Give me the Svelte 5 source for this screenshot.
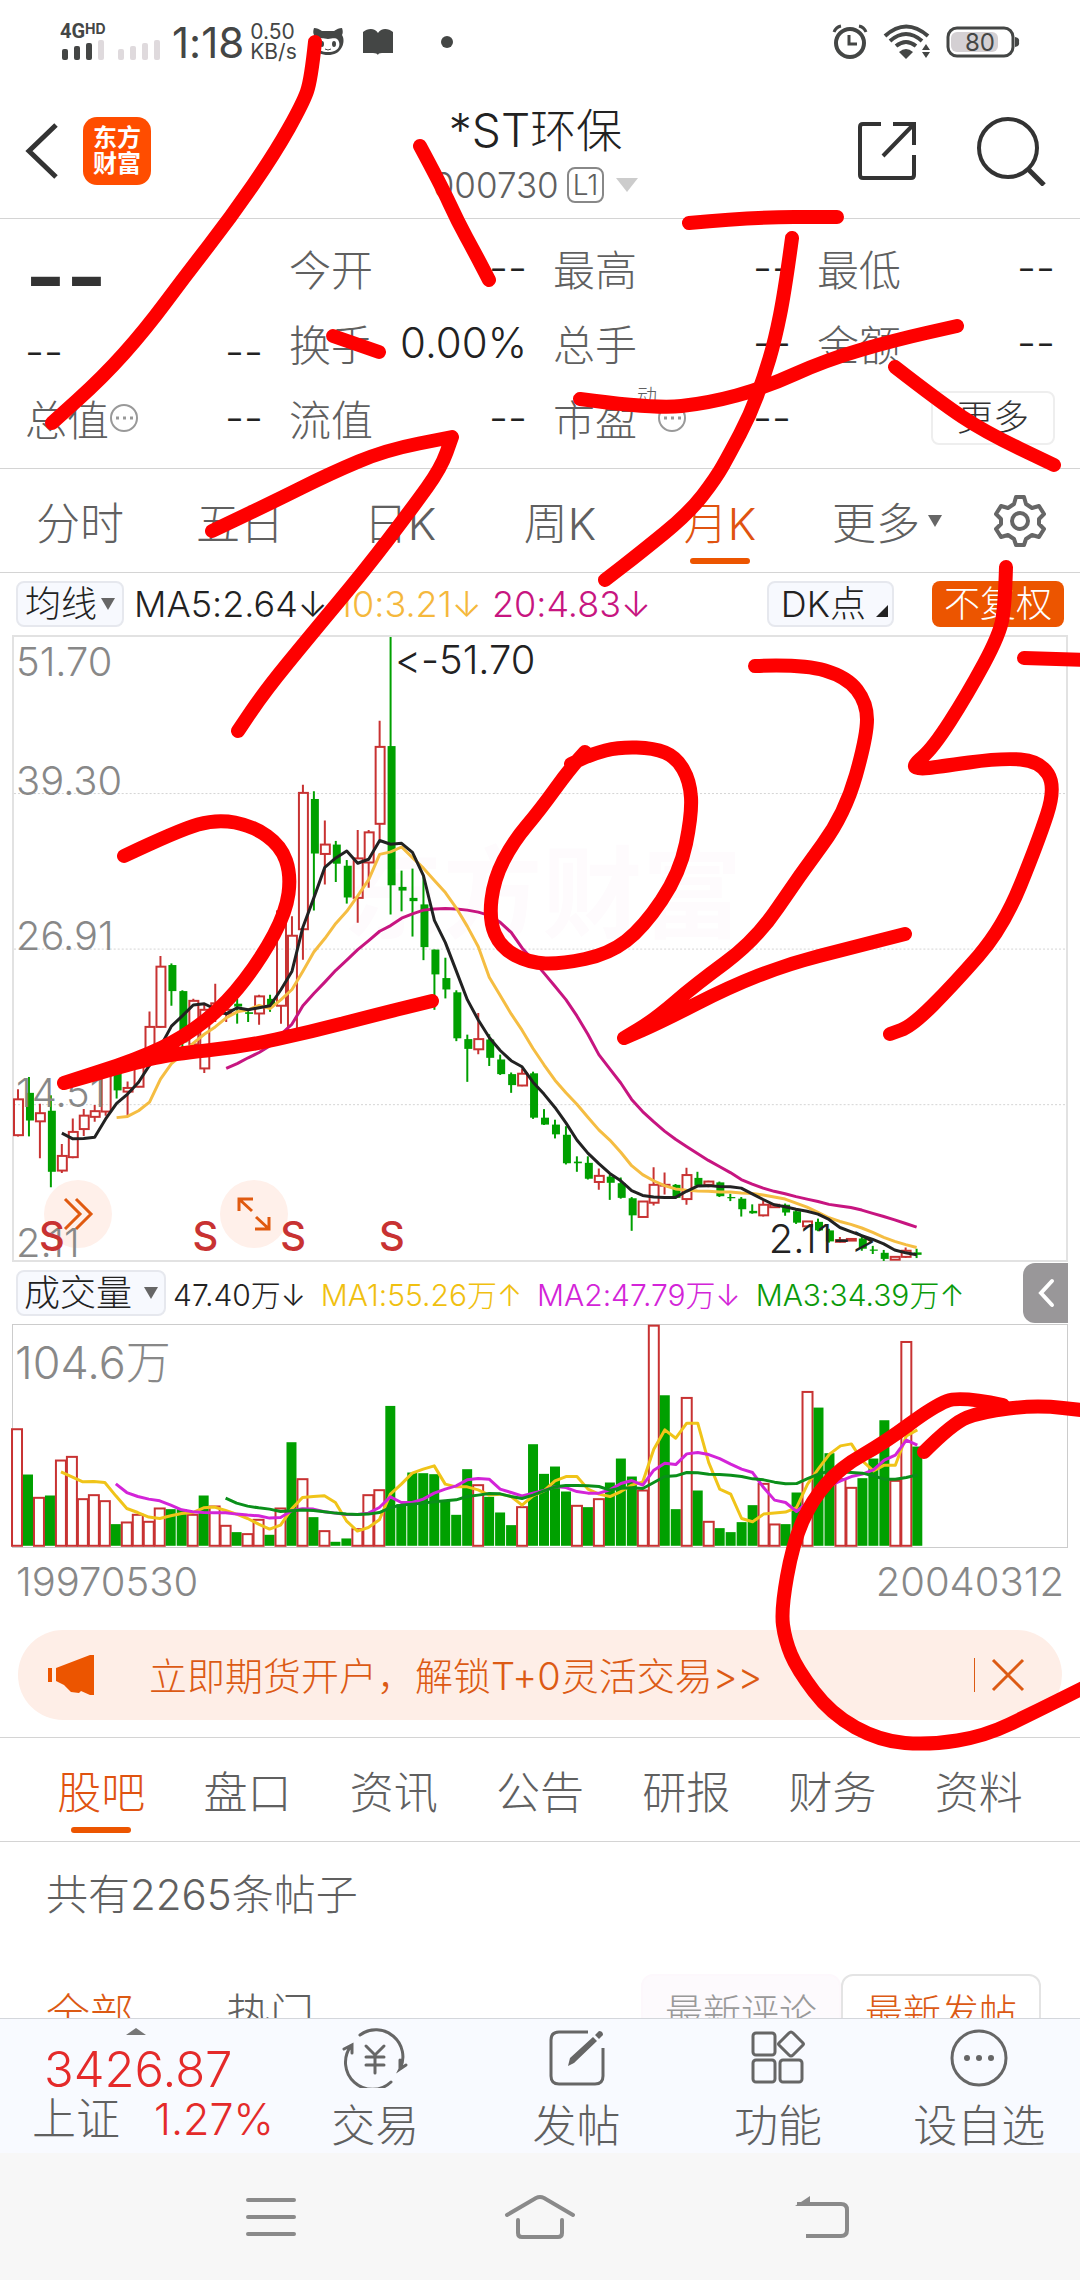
<script>
    const step = 10.99;
    const red = '#c83232';
    const green = '#00a000';

    // high, top, bottom, low, colour
    const candles = [
        [1125,1150,1238,1241,'r'],[1095,1134,1202,1241,'g'],[1161,1184,1204,1295,'r'],[1140,1178,1328,1366,'g'],
        [1260,1289,1325,1331,'r'],[1197,1230,1292,1295,'r'],[1174,1190,1223,1240,'r'],[1164,1179,1193,1205,'r'],
        [1080,1085,1180,1190,'r'],[1070,1078,1128,1148,'g'],[1106,1122,1131,1190,'r'],[1060,1068,1119,1120,'r'],
        [934,972,1060,1070,'r'],[798,824,972,974,'r'],[816,820,884,920,'g'],[882,884,1010,1025,'g'],
        [903,908,1015,1018,'r'],[915,930,1074,1085,'r'],[866,914,930,960,'r'],[900,930,940,960,'r'],
        [903,915,922,964,'g'],[930,936,940,960,'g'],[893,897,939,967,'r'],[893,903,918,935,'g'],
        [681,688,920,964,'r'],[700,748,980,990,'r'],[377,397,732,807,'r'],[393,412,546,686,'g'],
        [465,524,547,622,'r'],[515,524,571,616,'g'],[562,576,654,669,'g'],[488,558,655,716,'r'],
        [488,494,568,630,'r'],[220,284,473,512,'r'],[14,282,624,696,'g'],[588,628,637,688,'g'],
        [583,655,663,750,'g'],[600,671,776,808,'g'],[782,782,843,930,'g'],[802,852,880,902,'g'],
        [882,887,1000,1007,'g'],[991,1002,1026,1107,'g'],[938,1002,1027,1039,'r'],[990,1003,1048,1068,'g'],
        [1040,1052,1088,1090,'g'],[1084,1088,1115,1134,'g'],[1075,1087,1116,1118,'r'],[1082,1086,1195,1198,'g'],
        [1174,1195,1212,1213,'g'],[1200,1212,1236,1246,'g'],[1216,1237,1307,1310,'g'],[1290,1303,1307,1328,'g'],
        [1290,1306,1345,1347,'g'],[1320,1338,1353,1372,'r'],[1335,1340,1355,1397,'g'],[1342,1356,1392,1394,'g'],
        [1390,1393,1435,1473,'g'],[1400,1401,1439,1440,'r'],[1317,1360,1404,1411,'r'],[1330,1360,1362,1384,'r'],
        [1358,1360,1392,1394,'g'],[1318,1336,1395,1409,'r'],[1328,1343,1362,1364,'g'],[1350,1352,1360,1366,'r'],
        [1352,1354,1388,1390,'g'],[1382,1390,1393,1400,'g'],[1390,1394,1420,1438,'g'],[1408,1424,1430,1431,'g'],
        [1398,1409,1435,1438,'r'],[1408,1409,1415,1416,'r'],[1406,1409,1428,1436,'g'],[1422,1425,1453,1456,'g'],
        [1450,1450,1462,1466,'r'],[1443,1451,1472,1474,'g'],[1468,1472,1499,1502,'g'],[1488,1496,1500,1502,'r'],
        [1492,1493,1497,1498,'r'],[1485,1492,1517,1522,'g'],[1510,1519,1522,1530,'g'],[1520,1527,1542,1547,'g'],
        [1536,1537,1544,1545,'r'],[1514,1522,1537,1540,'r'],[1517,1526,1532,1540,'g']
    ];

    const ma5 = [1233,1247,1246,1243,1198,1160,1137,1108,1066,1020,970,945,918,915,928,940,925,930,925,920,880,835,727,655,580,557,540,570,560,514,523,521,543,600,710,765,835,905,955,998,1030,1055,1070,1108,1137,1170,1208,1250,1282,1308,1332,1350,1374,1386,1390,1391,1391,1376,1363,1362,1364,1365,1368,1382,1396,1409,1414,1420,1425,1432,1445,1465,1475,1485,1494,1505,1520,1527,1532];
    const ma10 = [1195,1192,1178,1157,1100,1062,1040,1012,990,972,950,935,930,919,927,905,880,835,788,755,718,688,650,610,548,542,530,556,582,612,642,680,725,775,850,895,940,980,1025,1065,1103,1134,1162,1194,1225,1250,1280,1313,1335,1350,1362,1370,1373,1375,1376,1378,1378,1380,1381,1385,1390,1395,1405,1415,1428,1441,1450,1457,1466,1477,1489,1499,1507,1514];
    const ma20 = [1074,1062,1048,1035,1018,990,965,920,890,862,833,808,782,760,737,723,705,694,685,682,681,682,685,690,698,715,740,778,808,840,872,905,945,990,1040,1075,1110,1150,1180,1205,1228,1248,1266,1283,1300,1315,1330,1347,1358,1368,1376,1382,1389,1395,1401,1408,1412,1416,1422,1430,1438,1446,1455,1464];

    const volumes = [
        'r537','g676','r743','g739','r631','r620','r747','r735','r753','g825','r817','r794','r815','r775','g780','g780',
        'r794','g739','r769','r827','g849','r852','r809','g857','r775','g579','r687','g804','r843','g878','g868','r837',
        'r735','r720','g470','g765','g670','g672','g675','g755','g797','g660','r705','g743','g790','g828','r771','g585',
        'g674','g652','g727','r767','g774','r747','g700','g628','g682','r721','r226','g438','g780','r443','g724','r815',
        'g837','g849','g819','g768','r701','r823','g825','g730','r425','g475','g612','r687','r713','g687','g628','g513',
        'r692','r275','g592'
    ];
    const vma1 = [668,683,698,697,700,740,778,790,804,808,800,793,790,776,774,784,795,808,825,840,828,780,745,742,740,760,815,846,835,812,735,705,672,660,650,705,713,713,722,738,735,742,768,740,725,695,682,682,720,735,742,727,708,698,600,542,567,522,522,640,720,735,808,818,795,792,789,775,705,658,615,590,584,635,665,648,648,560,542];
    const vma2 = [704,730,742,750,755,768,782,788,790,791,791,795,798,800,807,805,785,779,780,788,792,796,796,792,775,743,760,760,750,732,720,710,692,688,690,720,730,740,732,724,712,715,727,732,732,722,703,694,708,663,642,646,614,610,616,628,645,660,670,715,753,760,787,760,730,710,695,682,675,662,633,618,573,588];
    const vma3 = [747,762,771,776,780,787,785,783,784,788,792,795,796,795,790,775,768,765,762,758,755,752,742,738,733,734,742,748,738,725,713,709,709,710,712,723,717,716,718,700,682,680,670,671,675,676,678,682,689,692,699,704,703,688,675,665,668,670,672,680,690,690,685,677];

    const xAt = (i) => 4 + i * step;
    const priceY = (v) => (v - 14) / 2.45;
    const volumeY = (v) => (v - 227) / 3;

    function line(values, start, y) {
        return values.map((v, i) => xAt(start + i).toFixed(1) + ',' + y(v).toFixed(1)).join(' ');
    }

    // pen strokes drawn over the page
    const strokes = [
        [[315,42],[311,80],[303,103],[275,153],[231,217],[186,275],[145,330],[103,377],[52,423]],
        [[420,146],[441,185],[458,222],[475,253],[489,280]],
        [[689,223],[751,217],[837,217]],
        [[792,238],[785,290],[775,340],[764,377],[750,415],[730,453],[716,478],[689,513],[640,553],[605,580]],
        [[580,399],[654,409],[709,403],[764,388],[826,360],[895,340],[957,326]],
        [[895,367],[940,402],[985,432],[1054,465]],
        [[333,336],[379,352]],
        [[212,531],[269,504],[331,473],[386,450],[452,437],[452,437],[441,468],[413,507],[365,570],[310,636],[265,691],[238,731]],
        [[124,856],[179,830],[217,819],[253,826],[281,846],[291,875],[286,912],[262,957],[227,1003],[186,1036],[138,1059],[64,1083],[64,1083],[138,1062],[172,1054],[241,1047],[310,1032],[379,1014],[432,1001]],
        [[585,752],[571,767],[540,810],[513,842],[494,879],[489,920],[501,948],[530,963],[561,964],[609,954],[643,928],[680,873],[692,814],[690,781],[676,757],[654,748],[619,747],[592,754],[571,764]],
        [[755,666],[803,664],[847,677],[867,703],[867,736],[845,814],[800,875],[756,940],[695,985],[654,1020],[624,1038],[624,1038],[661,1022],[729,987],[788,964],[850,948],[905,934]],
        [[1006,567],[1005,603],[1000,634],[967,695],[933,748],[912,766],[920,769],[937,767],[1001,758],[1040,761],[1056,787],[1038,842],[1003,928],[953,985],[912,1026],[890,1034]],
        [[1024,658],[1090,660]],
        [[924,1452],[953,1423],[981,1412],[1036,1405],[1090,1411]],
        [[1003,1405],[960,1396],[934,1406],[884,1443],[841,1467],[812,1500],[793,1543],[781,1610],[785,1640],[797,1669],[831,1714],[880,1741],[930,1745],[985,1736],[1033,1713],[1085,1687]]
    ];

    function smooth(points) {
        let d = 'M' + points[0].join(' ');
        for (let i = 1; i < points.length - 1; i++) {
            const [x, y] = points[i];
            const [nx, ny] = points[i + 1];
            d += `Q${x} ${y} ${(x + nx) / 2} ${(y + ny) / 2}`;
        }
        return d + 'L' + points[points.length - 1].join(' ');
    }

    const periods = ['分时', '五日', '日K', '周K', '月K'];
    const sections = ['股吧', '盘口', '资讯', '公告', '研报', '财务', '资料'];
    let period = $state('月K');
    let section = $state('股吧');
</script>

<div class="app">
    <div class="status">
        <svg class="signal" width="102" height="48" viewBox="0 -8 102 48">
            <text x="0" y="16" class="net">4G</text>
            <text x="25" y="12" class="hd">HD</text>
            <g fill="#444645">
                <rect x="2" y="27" width="6" height="11" rx="2" />
                <rect x="14" y="24" width="6" height="14" rx="2" />
                <rect x="26" y="21" width="6" height="17" rx="2" />
            </g>
            <g fill="#dfdadd">
                <rect x="38" y="18" width="6" height="20" rx="2" />
                <rect x="58" y="27" width="6" height="11" rx="2" />
                <rect x="70" y="24" width="6" height="14" rx="2" />
                <rect x="82" y="21" width="6" height="17" rx="2" />
                <rect x="94" y="18" width="6" height="20" rx="2" />
            </g>
        </svg>
        <span class="clock">1:18</span>
        <span class="speed">0.50<br />KB/s</span>
        <svg width="34" height="30" viewBox="0 0 34 30">
            <path fill="#444645" d="M3 1c3 0 5 1 8 3h12c3-2 5-3 8-3 1 3 1 5 0 7 2 3 2 8 0 12-3 6-8 8-14 8S5 26 2 20C1 16 1 11 3 8 2 6 2 4 3 1z" />
            <path fill="#fff" d="M7 13c3-3 6-1 10-1s7-2 10 1c3 4 2 12-10 12S4 17 7 13z" />
            <ellipse cx="11" cy="17" rx="2" ry="3" fill="#444645" />
            <ellipse cx="23" cy="17" rx="2" ry="3" fill="#444645" />
            <path d="M14 22q3 2 6 0" fill="none" stroke="#444645" />
        </svg>
        <svg class="book" width="30" height="26" viewBox="0 0 30 26">
            <path fill="#444645" d="M0 3C5-1 12-1 15 4c3-5 10-5 15-1v21H19q-4 0-4 2-1-2-5-2H0z" />
        </svg>
        <i class="dot"></i>
        <div class="status-right">
            <svg width="36" height="36" viewBox="0 0 36 36" fill="none" stroke="#444645">
                <circle cx="18" cy="19" r="14" stroke-width="4" />
                <path d="M17 11v9h8" stroke-width="3" />
                <path d="M2 8q2-5 7-6M34 8q-2-5-7-6" stroke-width="3" />
            </svg>
            <svg width="48" height="36" viewBox="0 0 48 36" fill="none" stroke="#444645" stroke-width="4">
                <path d="M2 12q21-19 43 0M7 17q16-14 32 0M13 22q10-8 20 0" />
                <path d="M16 28q7-6 14 0l-7 7z" fill="#444645" stroke="none" />
                <path d="M39 26l4-6 4 6zM39 28l4 6 4-6z" fill="#444645" stroke="none" />
            </svg>
            <svg width="74" height="32" viewBox="0 0 74 32">
                <rect x="2" y="2" width="65" height="28" rx="9" fill="none" stroke="#444645" stroke-width="3" />
                <rect x="5" y="6" width="47" height="20" rx="6" fill="#d4d0d3" />
                <path d="M69 11q5 1 4 5 1 4-4 5z" fill="#444645" />
                <text x="34" y="25" text-anchor="middle" class="battery">80</text>
            </svg>
        </div>
    </div>

    <header>
        <div class="side">
            <button aria-label="返回">
                <svg width="34" height="56" viewBox="0 0 34 56" fill="none" stroke="#333" stroke-width="5">
                    <path d="M31 2L4 28l27 26" />
                </svg>
            </button>
            <span class="logo">东方<br />财富</span>
        </div>
        <div class="title">
            <h1>*ST环保</h1>
            <button class="code">000730<span class="level">L1</span><i class="down"></i></button>
        </div>
        <div class="side right">
            <button aria-label="分享">
                <svg width="60" height="60" viewBox="0 0 60 60" fill="none" stroke="#333" stroke-width="4">
                    <path d="M24 3H6q-3 0-3 3v48q0 3 3 3h48q3 0 3-3V34" />
                    <path d="M36 3h21v21M57 3L26 35" />
                </svg>
            </button>
            <button aria-label="搜索">
                <svg width="70" height="70" viewBox="0 0 70 70" fill="none" stroke="#333" stroke-width="4">
                    <circle cx="32" cy="32" r="29" />
                    <path d="M52 53l16 16" stroke-width="5" />
                </svg>
            </button>
        </div>
    </header>

    <section class="quote">
        <div class="col first">
            <div class="price">--</div>
            <div class="cell change"><b>--</b><b>--</b></div>
            <div class="cell"><span class="tip">总值<svg width="30" height="30" viewBox="0 0 30 30"><circle cx="15" cy="15" r="13" fill="none" stroke="#999" stroke-width="2" /><path d="M7 15h3m4 0h3m4 0h3" stroke="#999" stroke-width="3" /></svg></span><b>--</b></div>
        </div>
        <div class="col">
            <div class="cell">今开<b>--</b></div>
            <div class="cell">换手<b>0.00%</b></div>
            <div class="cell">流值<b>--</b></div>
        </div>
        <div class="col">
            <div class="cell">最高<b>--</b></div>
            <div class="cell">总手<b>--</b></div>
            <div class="cell"><span class="tip">市盈<sup>动</sup><svg width="30" height="30" viewBox="0 0 30 30"><circle cx="15" cy="15" r="13" fill="none" stroke="#999" stroke-width="2" /><path d="M7 15h3m4 0h3m4 0h3" stroke="#999" stroke-width="3" /></svg></span><b>--</b></div>
        </div>
        <div class="col">
            <div class="cell">最低<b>--</b></div>
            <div class="cell">金额<b>--</b></div>
            <div class="cell end"><button class="more">更多</button></div>
        </div>
    </section>

    <nav class="periods">
        {#each periods as p}
            <button class:active={p === period} onclick={() => period = p}>{p}</button>
        {/each}
        <button class="other">更多<i class="caret"></i></button>
        <button aria-label="设置">
            <svg width="52" height="54" viewBox="0 0 52 54" fill="none" stroke="#666" stroke-width="4" stroke-linejoin="round">
                <path d="M22 3h8l2 7 6 4 7-2 5 8-5 5v5l5 5-5 8-7-2-6 4-2 6h-8l-2-6-6-4-7 2-5-8 5-5v-5l-5-5 5-8 7 2 6-4z" />
                <circle cx="26" cy="27" r="8" />
            </svg>
        </button>
    </nav>

    <div class="indicators">
        <button class="pill">均线<i class="caret"></i></button>
        <span>MA5:2.64↓</span>
        <span class="yellow">10:3.21↓</span>
        <span class="pink">20:4.83↓</span>
        <button class="pill dk">DK点<i class="corner"></i></button>
        <button class="adjust">不复权</button>
    </div>

    <div class="chart">
        <button class="round forward" aria-label="快进">
            <svg width="32" height="34" viewBox="0 0 32 34" fill="none" stroke="#e05a10" stroke-width="3">
                <path d="M3 2l15 15L3 32M14 2l15 15-15 15" />
            </svg>
        </button>
        <button class="round expand" aria-label="全屏">
            <svg width="36" height="36" viewBox="0 0 36 36" fill="none" stroke="#e05a10" stroke-width="3">
                <path d="M3 15V3h14M3 3l13 12M20 21l13 12M33 21v12H19" />
            </svg>
        </button>
        <svg class="plot" viewBox="0 0 1055 625">
            <text x="330" y="294" class="mark">东方财富</text>
            {#each [157, 313, 469] as y}
                <path d="M0 {y}H1055" stroke="#d4d4d4" stroke-dasharray="2 2" />
            {/each}
            {#each candles as [high, top, bottom, low, c], i}
                {#if c === 'r'}
                    <path d="M{xAt(i)} {priceY(high)}V{priceY(top)}M{xAt(i)} {priceY(bottom)}V{priceY(low)}" stroke={red} stroke-width="2" />
                    <rect x={xAt(i) - 4} y={priceY(top)} width="9" height={priceY(bottom) - priceY(top)} fill="none" stroke={red} stroke-width="2" />
                {:else}
                    <path d="M{xAt(i)} {priceY(high)}V{priceY(low)}" stroke={green} stroke-width="2" />
                    <rect x={xAt(i) - 3} y={priceY(top)} width="8" height={priceY(bottom) - priceY(top)} fill={green} />
                {/if}
            {/each}
            <polyline points={line(ma20, 19, priceY)} stroke="#c71580" class="ma" />
            <polyline points={line(ma10, 9, priceY)} stroke="#f5bd42" class="ma" />
            <polyline points={line(ma5, 4, priceY)} stroke="#222" class="ma" />
            <g class="axis">
                <text x="2" y="39">51.70</text>
                <text x="2" y="158">39.30</text>
                <text x="2" y="314">26.91</text>
                <text x="2" y="471">14.51</text>
                <text x="2" y="622">2.11</text>
            </g>
            <g class="extreme">
                <text x="382" y="37">&lt;-51.70</text>
                <text x="757" y="618">2.11-&gt;</text>
            </g>
            {#each [38, 192, 280, 379] as x}
                <text {x} y="615" text-anchor="middle" class="sell">S</text>
            {/each}
        </svg>
    </div>

    <div class="volume-head">
        <button class="pill">成交量<i class="caret"></i></button>
        <span>47.40万↓</span>
        <span class="gold">MA1:55.26万↑</span>
        <span class="violet">MA2:47.79万↓</span>
        <span class="green">MA3:34.39万↑</span>
        <button class="drawer" aria-label="展开">
            <svg width="18" height="30" viewBox="0 0 18 30" fill="none" stroke="#fff" stroke-width="4" stroke-linecap="round">
                <path d="M15 3L4 15l11 12" />
            </svg>
        </button>
    </div>

    <div class="volume">
        <svg class="plot" viewBox="0 0 1055 222">
            {#each volumes as v, i}
                {@const y = volumeY(+v.slice(1))}
                {#if v[0] === 'r'}
                    <rect x={xAt(i) - 5} y={y + 1} width="10" height={220 - y} fill="#fff" stroke={red} stroke-width="2" />
                {:else}
                    <rect x={xAt(i) - 5} {y} width="10" height={221 - y} fill={green} />
                {/if}
            {/each}
            <polyline points={line(vma1, 4, volumeY)} stroke="#f0c419" class="ma" />
            <polyline points={line(vma2, 9, volumeY)} stroke="#d324d8" class="ma" />
            <polyline points={line(vma3, 19, volumeY)} stroke="#0a8f1a" class="ma" />
            <text x="2" y="54" class="top-volume">104.6万</text>
        </svg>
    </div>
    <div class="dates"><span>19970530</span><span>20040312</span></div>

    <div class="banner">
        <svg width="46" height="40" viewBox="0 0 46 40" fill="#ec5500">
            <path d="M0 13h4v14H0zM8 13L42 0h4v40h-4l-9-4-2 2-8-1-7-7-8-4z" />
        </svg>
        <a href="#open">立即期货开户，解锁T+0灵活交易&gt;&gt;</a>
        <button aria-label="关闭">
            <svg width="34" height="34" viewBox="0 0 34 34" stroke="#dc5a14" stroke-width="3"><path d="M2 2l30 30M32 2L2 32" /></svg>
        </button>
    </div>

    <nav class="sections">
        {#each sections as s}
            <button class:active={s === section} onclick={() => section = s}>{s}</button>
        {/each}
    </nav>

    <main>
        <p>共有2265条帖子</p>
        <div class="filters">
            <button class="on">全部</button>
            <button>热门</button>
            <div class="sort">
                <button>最新评论</button>
                <button class="selected">最新发帖</button>
            </div>
        </div>
    </main>

    <footer>
        <a class="index" href="#index">
            <i class="up"></i>
            <strong>3426.87</strong>
            <span>上证<em>1.27%</em></span>
        </a>
        <button>
            <svg width="66" height="60" viewBox="0 0 66 60" fill="none" stroke="#666" stroke-width="3" stroke-linecap="round">
                <path d="M18 7A27 27 0 0 1 58 41l6-4M58 41V32M49 54A27 27 0 0 1 9 18M2 21l8-4v8" />
                <path d="M24 18l9 9 9-9M33 27v18M24 29h18M24 37h18" />
            </svg>
            交易
        </button>
        <button>
            <svg width="56" height="60" viewBox="0 0 56 60" fill="none" stroke="#666" stroke-width="3">
                <path d="M39 4H10q-8 0-8 8v36q0 8 8 8h36q8 0 8-8V20" />
                <path d="M19 38l2-8 23-21 4 4-23 22zM46 7l4-4q4 0 4 4l-4 4z" fill="#666" stroke="none" />
            </svg>
            发帖
        </button>
        <button>
            <svg width="54" height="60" viewBox="0 0 54 60" fill="none" stroke="#666" stroke-width="3">
                <rect x="2" y="5" width="22" height="22" rx="3" />
                <rect x="2" y="32" width="22" height="22" rx="3" />
                <rect x="29" y="32" width="22" height="22" rx="3" />
                <path d="M38 5q2-2 4 0l10 10q1 1 0 2L42 27q-2 2-4 0L28 17q-1-1 0-2z" />
            </svg>
            功能
        </button>
        <button>
            <svg width="60" height="60" viewBox="0 0 60 60" fill="none" stroke="#666" stroke-width="3">
                <circle cx="30" cy="30" r="27" />
                <g fill="#666" stroke="none"><circle cx="18" cy="30" r="3" /><circle cx="30" cy="30" r="3" /><circle cx="42" cy="30" r="3" /></g>
            </svg>
            设自选
        </button>
    </footer>

    <div class="system">
        <button aria-label="菜单">
            <svg width="50" height="44" viewBox="0 0 50 44" stroke="#8a8a8a" stroke-width="4" stroke-linecap="round">
                <path d="M2 5h46M2 22h46M2 39h46" />
            </svg>
        </button>
        <button aria-label="主页">
            <svg width="72" height="46" viewBox="0 0 72 46" fill="none" stroke="#8a8a8a" stroke-width="4" stroke-linecap="round">
                <path d="M3 21L32 4q4-2 8 0l29 17M14 26v13q0 4 4 4h36q4 0 4-4V26" />
            </svg>
        </button>
        <button aria-label="后退">
            <svg width="80" height="44" viewBox="0 0 80 44" fill="none" stroke="#8a8a8a" stroke-width="4">
                <path d="M28 9h44q6 0 6 6v20q0 6-6 6H37" />
                <path d="M26 11L41 1v10z" fill="#8a8a8a" stroke="none" />
            </svg>
        </button>
    </div>

    <svg class="ink" viewBox="0 0 1080 2280" aria-hidden="true">
        {#each strokes as s}
            <path d={smooth(s)} />
        {/each}
    </svg>
</div>

<style>
    .app {
        position: relative;
        display: flex;
        flex-direction: column;
        height: 100vh;
        overflow: hidden;
        background: #fff;
        color: #606060;
        font-family: Inter, "Noto Sans CJK SC", sans-serif;
        font-weight: 300;
        font-feature-settings: "calt" 0;
    }
    .app > * {
        flex-shrink: 0;
        box-sizing: border-box;
    }
    button {
        margin: 0;
        padding: 0;
        border: 0;
        background: none;
        color: inherit;
        font: inherit;
        white-space: nowrap;
    }
    svg {
        display: block;
    }
    a {
        color: inherit;
        text-decoration: none;
    }

    .status {
        display: flex;
        align-items: center;
        height: 84px;
        padding: 0 60px;
        color: #444645;
    }
    .signal {
        margin-bottom: 8px;
    }
    .net {
        font: 700 20px Roboto, sans-serif;
        fill: #444645;
    }
    .hd {
        font: 700 14px Inter, sans-serif;
        fill: #444645;
    }
    .clock {
        margin-left: 10px;
        font-size: 42px;
        font-weight: 400;
    }
    .speed {
        margin: 0 14px 0 6px;
        font-size: 21px;
        line-height: 20px;
        font-weight: 400;
    }
    .book {
        margin: 0 48px 0 18px;
    }
    .dot {
        width: 12px;
        height: 12px;
        border-radius: 50%;
        background: #444645;
    }
    .status-right {
        display: flex;
        align-items: center;
        gap: 15px;
        margin-left: auto;
    }
    .battery {
        font: 400 24px Inter, sans-serif;
        fill: #444645;
    }

    header {
        display: flex;
        align-items: center;
        height: 135px;
        padding: 0 34px 0 25px;
        border-bottom: 1px solid #d4d4d4;
    }
    .side {
        display: flex;
        flex: 1;
        align-items: center;
        gap: 24px;
    }
    .side.right {
        justify-content: flex-end;
        gap: 59px;
    }
    .logo {
        padding: 8px 10px;
        border-radius: 14px;
        background: #ff4d00;
        color: #fff;
        font-size: 24px;
        line-height: 26px;
        font-weight: 700;
    }
    .title {
        padding-top: 8px;
        text-align: center;
    }
    h1 {
        margin: 0;
        color: #222;
        font-size: 46px;
        line-height: 60px;
        font-weight: 300;
    }
    .code {
        display: flex;
        align-items: center;
        gap: 8px;
        font-size: 35px;
        line-height: 50px;
    }
    .level {
        padding: 0 4px;
        border: 2px solid #888;
        border-radius: 8px;
        font-size: 28px;
        line-height: 32px;
    }
    .down {
        margin-left: 4px;
        border: 11px solid transparent;
        border-top: 14px solid #ccc;
        border-bottom: 0;
    }

    .quote {
        display: grid;
        grid-template-columns: repeat(4, 1fr);
        gap: 26px;
        height: 250px;
        padding: 11px 25px 0;
        border-bottom: 1px solid #d4d4d4;
        font-size: 42px;
    }
    .cell {
        display: flex;
        align-items: center;
        justify-content: space-between;
        height: 75px;
        white-space: nowrap;
    }
    .cell b {
        color: #222;
        font-weight: 300;
    }
    .price {
        height: 92px;
        color: #333;
        font-size: 88px;
        line-height: 92px;
        font-weight: 600;
    }
    .change {
        height: 58px;
    }
    .end {
        justify-content: flex-end;
    }
    .tip {
        display: flex;
        align-items: center;
    }
    .tip sup {
        align-self: flex-start;
        font-size: 20px;
        line-height: 20px;
    }
    .more {
        padding: 0 24px;
        border: 2px solid #eee;
        border-radius: 8px;
        color: #333;
        font-size: 36px;
        line-height: 50px;
    }

    .periods {
        display: grid;
        grid-template-columns: repeat(6, 4fr) 3fr;
        height: 104px;
        border-bottom: 1px solid #d4d4d4;
        font-size: 44px;
    }
    .periods button, .sections button {
        position: relative;
        display: flex;
        align-items: center;
        justify-content: center;
    }
    .periods .other {
        padding-left: 14px;
    }
    .periods .active, .sections .active {
        color: #e05310;
    }
    .active::after {
        content: "";
        position: absolute;
        bottom: 8px;
        width: 60px;
        height: 6px;
        border-radius: 3px;
        background: #ec5500;
    }
    .caret {
        display: inline-block;
        margin-left: 8px;
        border: 7px solid transparent;
        border-top: 12px solid #666;
        border-bottom: 0;
    }

    .indicators {
        display: flex;
        align-items: center;
        gap: 10px;
        height: 62px;
        padding: 0 16px;
        color: #222;
        font-size: 36px;
        white-space: nowrap;
    }
    .pill {
        display: flex;
        align-items: center;
        padding: 0 7px;
        border: 2px solid #e6e8ee;
        border-radius: 8px;
        background: #f7f9fe;
        color: #222;
        font-size: 36px;
        line-height: 42px;
    }
    .indicators .caret {
        margin-left: 4px;
    }
    .dk {
        margin-left: auto;
        padding: 0 4px 0 12px;
    }
    .corner {
        align-self: flex-end;
        margin: 0 0 8px 10px;
        border-left: 12px solid transparent;
        border-bottom: 12px solid #222;
    }
    .adjust {
        margin-left: 28px;
        padding: 0 12px;
        border-radius: 8px;
        background: #ec5500;
        color: #fff;
        font-size: 36px;
        line-height: 46px;
    }
    .yellow { color: #f5b83c; }
    .pink { color: #c71580; }
    .gold { color: #f0c010; }
    .violet { color: #d324d8; }
    .green { color: #0a9a0a; }

    .chart {
        position: relative;
        margin: 0 12px;
        border: 2px solid #e2e2e2;
    }
    .plot {
        position: relative;
        width: 100%;
        height: auto;
        overflow: visible;
        pointer-events: none;
    }
    .round {
        position: absolute;
        bottom: 12px;
        display: grid;
        place-items: center;
        width: 68px;
        height: 68px;
        border-radius: 50%;
        background: #fff0ea;
    }
    .forward { left: 30px; }
    .expand { left: 206px; }
    .ma {
        fill: none;
        stroke-width: 3;
        stroke-linejoin: round;
    }
    .mark {
        font-size: 100px;
        font-weight: 700;
        fill: #fefbfd;
    }
    .axis {
        font-size: 40px;
        fill: #888;
    }
    .extreme {
        font-size: 40px;
        fill: #222;
    }
    .sell {
        font-size: 40px;
        font-weight: 500;
        fill: #c83232;
    }

    .volume-head {
        display: flex;
        align-items: center;
        gap: 15px;
        height: 62px;
        padding: 0 12px 0 16px;
        color: #222;
        font-size: 30px;
        white-space: nowrap;
    }
    .volume-head .pill {
        margin-right: -8px;
        padding: 0 6px;
    }
    .volume-head .caret {
        margin-left: 12px;
    }
    .drawer {
        display: grid;
        place-items: center;
        width: 45px;
        height: 60px;
        margin-left: auto;
        border-radius: 12px 0 0 12px;
        background: #999799;
    }
    .volume {
        margin: 0 12px;
        border: 1px solid #ccc;
    }
    .top-volume {
        font-size: 45px;
        fill: #888;
    }
    .dates {
        display: flex;
        justify-content: space-between;
        padding: 12px 16px 26px;
        color: #888;
        font-size: 40px;
        line-height: 44px;
    }

    .banner {
        display: flex;
        align-items: center;
        height: 90px;
        margin: 0 18px 17px;
        padding: 0 37px 0 30px;
        border-radius: 45px;
        background: #feeee7;
        color: #dc5a14;
        font-size: 38px;
    }
    .banner a {
        flex: 1;
        margin-left: 55px;
        padding-bottom: 4px;
    }
    .banner button {
        padding-left: 16px;
        border-left: 1px solid #dc5a14;
    }

    .sections {
        display: grid;
        grid-template-columns: repeat(7, 1fr);
        height: 105px;
        padding: 0 28px;
        border-top: 1px solid #d4d4d4;
        border-bottom: 1px solid #d4d4d4;
        font-size: 44px;
    }

    main {
        flex: 1 1 0;
        min-height: 0;
        overflow: hidden;
        padding: 0 39px 0 46px;
        font-size: 42px;
    }
    main p {
        margin: 30px 0 56px;
        line-height: 46px;
    }
    .filters {
        display: flex;
        align-items: center;
        gap: 92px;
        font-size: 44px;
    }
    .on {
        color: #dc5a14;
    }
    .sort {
        display: flex;
        margin-left: auto;
        font-size: 38px;
    }
    .sort button {
        padding: 0 22px;
        border: 2px solid #fdf8fc;
        border-radius: 12px;
        background: #fdfafd;
        color: #999;
        line-height: 72px;
    }
    .sort .selected {
        border-color: #e4e4e4;
        background: #fff;
        color: #dc5a14;
    }

    footer {
        display: grid;
        grid-template-columns: 274fr 201fr 201fr 201fr 201fr;
        height: 135px;
        border-top: 1px solid #d4d7dc;
        background: #f8faff;
        font-size: 44px;
    }
    footer button {
        display: flex;
        flex-direction: column;
        align-items: center;
        padding-top: 9px;
        line-height: 76px;
    }
    .index {
        position: relative;
        display: flex;
        flex-direction: column;
        padding: 26px 0 0 32px;
        white-space: nowrap;
    }
    .index strong {
        padding-left: 12px;
        color: #e42a2a;
        font-size: 49px;
        line-height: 50px;
        font-weight: 300;
    }
    .index span {
        line-height: 48px;
    }
    .index em {
        margin-left: 34px;
        color: #e42a2a;
        font-size: 43px;
        font-style: normal;
    }
    .up {
        position: absolute;
        top: 9px;
        left: 46%;
        border: 10px solid transparent;
        border-top: 0;
        border-bottom: 7px solid #777;
    }

    .system {
        display: grid;
        grid-template-columns: repeat(3, 1fr);
        height: 127px;
        padding: 0 136px;
        background: #f7f7f7;
    }
    .system button {
        display: grid;
        place-items: center;
    }

    .ink {
        position: absolute;
        top: 0;
        left: 0;
        width: 100%;
        pointer-events: none;
        fill: none;
        stroke: #fe0000;
        stroke-width: 14;
        stroke-linecap: round;
        stroke-linejoin: round;
    }
</style>
